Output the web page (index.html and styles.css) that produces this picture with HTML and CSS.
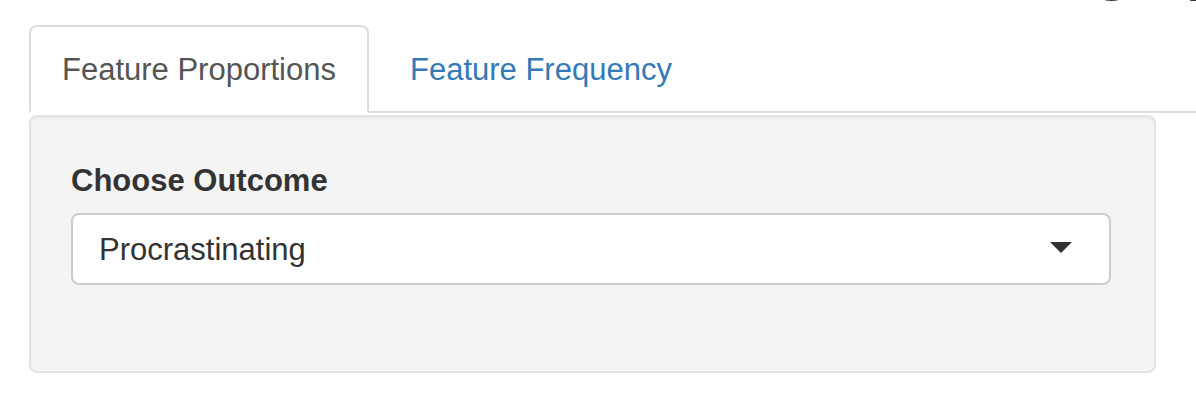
FILE: index.html
```html
<!DOCTYPE html>
<html lang="en">
<head>
<meta charset="utf-8">
<title>Feature Proportions</title>
<link rel="stylesheet" href="styles.css">
</head>
<body>
<div class="title-clip">
  <h1 class="page-title">Features, Outcomes, and Setting up</h1>
</div>
<div class="main">
  <ul class="tabs">
    <li class="tab active"><a href="#">Feature Proportions</a></li>
    <li class="tab"><a href="#">Feature Frequency</a></li>
  </ul>
  <div class="well">
    <label class="field-label">Choose Outcome</label>
    <div class="select">
      <span class="select-value">Procrastinating</span>
      <span class="caret"></span>
    </div>
  </div>
</div>
</body>
</html>
```
FILE: styles.css
```css
html, body {
  margin: 0;
  padding: 0;
  background: #fff;
}

body {
  font-family: "Liberation Sans", Arial, Helvetica, sans-serif;
  color: #333;
}

.title-clip {
  height: 4px;
  overflow: hidden;
}

.page-title {
  margin: -65px 0 0;
  width: 1224px;
  font-size: 62px;
  line-height: 64px;
  font-weight: bold;
  white-space: nowrap;
  text-align: right;
  color: #333;
}

.main {
  padding: 21px 0 0 29px;
}

.tabs {
  display: flex;
  margin: 0;
  padding: 0;
  list-style: none;
  border-bottom: 2px solid #ddd;
}

.tab {
  margin-bottom: -2px;
  margin-right: 8px;
}

.tab a {
  display: block;
  padding: 21px 31px 19px;
  font-size: 31px;
  line-height: 44px;
  border: 2px solid transparent;
  border-radius: 8px 8px 0 0;
  color: #337ab7;
  text-decoration: none;
}

.tab.active a {
  color: #555;
  background: #fff;
  border-color: #ddd #ddd transparent;
}

.well {
  box-sizing: border-box;
  width: 1127px;
  margin-top: 2px;
  padding: 42px 43px 86px 40px;
  background: #f4f4f4;
  border: 2px solid #e3e3e3;
  border-radius: 8px;
  box-shadow: inset 0 2px 2px rgba(0, 0, 0, 0.04);
}

.field-label {
  display: block;
  margin-bottom: 10px;
  font-size: 31px;
  line-height: 44px;
  font-weight: bold;
  color: #333;
}

.select {
  box-sizing: border-box;
  height: 72px;
  display: flex;
  align-items: center;
  justify-content: space-between;
  padding: 2px 37px 0 26px;
  background: #fff;
  border: 2px solid #ccc;
  border-radius: 8px;
  font-size: 31px;
  line-height: 44px;
  color: #333;
}

.caret {
  width: 0;
  height: 0;
  margin-bottom: 6px;
  border-style: solid;
  border-width: 11px 11px 0 11px;
  border-color: #333 transparent transparent transparent;
}
```
